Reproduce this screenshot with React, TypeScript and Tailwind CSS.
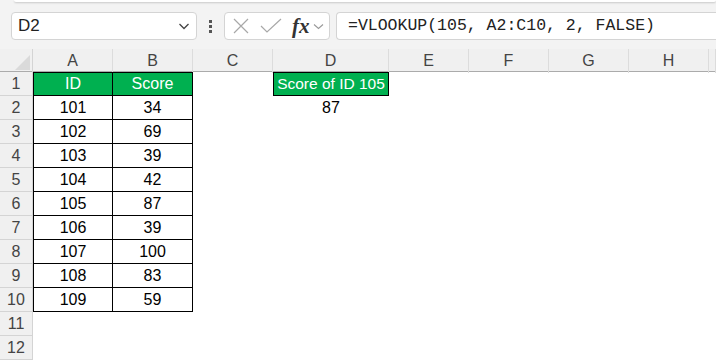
import React from 'react';

const cols = ['A', 'B', 'C', 'D', 'E', 'F', 'G', 'H', ''];
const data: [number, number][] = [
  [101, 34], [102, 69], [103, 39], [104, 42], [105, 87],
  [106, 39], [107, 100], [108, 83], [109, 59],
];

const gridCols = 'grid grid-cols-[33px_80px_80px_80px_116px_80px_80px_80px_80px_1fr]';

// toolbar with name box and formula bar
const Toolbar = () => (
  <div className="flex h-[28px] items-stretch">
    <div className="ml-[11px] flex w-[186px] items-center justify-between rounded-[4px] border border-[#d4d4d4] bg-white pl-[6px] pr-[6px]">
      <span className="text-[17px] text-[#222]">D2</span>
      <svg width="12" height="8" viewBox="0 0 12 8" fill="none" stroke="#444" strokeWidth="1.3">
        <path d="M1.5 2l4.5 4.5L10.5 2" />
      </svg>
    </div>
    <div className="flex w-[27px] flex-col items-center justify-center gap-[2px]">
      <span className="h-[3px] w-[3px] bg-[#555]" />
      <span className="h-[3px] w-[3px] bg-[#555]" />
      <span className="h-[3px] w-[3px] bg-[#555]" />
    </div>
    <div className="flex w-[106px] items-center rounded-[4px] border border-[#d4d4d4] bg-white pl-[7px]">
      <svg width="18" height="18" viewBox="0 0 18 18" fill="none" stroke="#a8a8a8" strokeWidth="1.2">
        <path d="M2 2l14 14M16 2L2 16" />
      </svg>
      <svg className="ml-[10px]" width="22" height="18" viewBox="0 0 22 18" fill="none" stroke="#a8a8a8" strokeWidth="1.2">
        <path d="M1 9l6 6L21 2" />
      </svg>
      <span className="ml-[10px] font-['Liberation_Serif',serif] text-[21px] font-bold italic leading-none text-[#333]">fx</span>
      <svg className="ml-[3px]" width="11" height="7" viewBox="0 0 11 7" fill="none" stroke="#999" strokeWidth="1.1">
        <path d="M1 1.5l4.5 4L10 1.5" />
      </svg>
    </div>
    <div className="ml-[6px] flex flex-1 items-center rounded-l-[4px] border border-r-0 border-[#d4d4d4] bg-white pl-[11px]">
      <span className="font-['Liberation_Mono',monospace] text-[16.5px] text-[#222]">=VLOOKUP(105, A2:C10, 2, FALSE)</span>
    </div>
  </div>
);

const RowHead = ({ n }: { n: number }) => (
  <div className="flex items-center justify-center border-b border-r border-[#d4d4d4] bg-[#f0f0f0] text-[16px] text-[#444]">
    {n}
  </div>
);

export default function App() {
  return (
    <div className="h-[360px] w-[716px] overflow-hidden bg-[#f3f3f3] font-['Liberation_Sans',Arial,sans-serif]">
      <div className="ml-[14px] h-[2px] rounded-b-[3px] bg-white shadow-[0_1px_2px_rgba(0,0,0,0.18)]" />
      <div className="mt-[10px]">
        <Toolbar />
      </div>

      {/* column headers */}
      <div className={`${gridCols} mt-[9px] h-[23px] border-b border-[#ababab] bg-[#f0f0f0]`}>
        <div className="relative border-r border-[#d4d4d4]">
          <div className="absolute bottom-[3px] right-[2px] h-0 w-0 border-b-[15px] border-l-[15px] border-b-[#dadada] border-l-transparent" />
        </div>
        {cols.map((c, i) => (
          <div key={i} className="flex items-center justify-center border-r border-[#dcdcdc] text-[16px] text-[#444]">
            {c}
          </div>
        ))}
      </div>

      {/* sheet body */}
      <div className={`${gridCols} auto-rows-[24px] bg-white text-[16px] text-black`}>
        <RowHead n={1} />
        <div className="flex items-center justify-center border border-black bg-[#00b050] text-white">ID</div>
        <div className="flex items-center justify-center border-y border-r border-black bg-[#00b050] text-white">Score</div>
        <div />
        <div className="flex items-center justify-center border border-black bg-[#00b050] text-[15.5px] text-white">Score of ID 105</div>
        <div /><div /><div /><div /><div />

        {data.map(([id, score], i) => (
          <React.Fragment key={id}>
            <RowHead n={i + 2} />
            <div className="flex items-center justify-center border-b border-l border-r border-black">{id}</div>
            <div className="flex items-center justify-center border-b border-r border-black">{score}</div>
            <div />
            <div className="flex items-center justify-center">{i === 0 ? '87' : ''}</div>
            <div /><div /><div /><div /><div />
          </React.Fragment>
        ))}

        {[11, 12].map((n) => (
          <React.Fragment key={n}>
            <RowHead n={n} />
            <div /><div /><div /><div /><div /><div /><div /><div /><div />
          </React.Fragment>
        ))}
      </div>
    </div>
  );
}
